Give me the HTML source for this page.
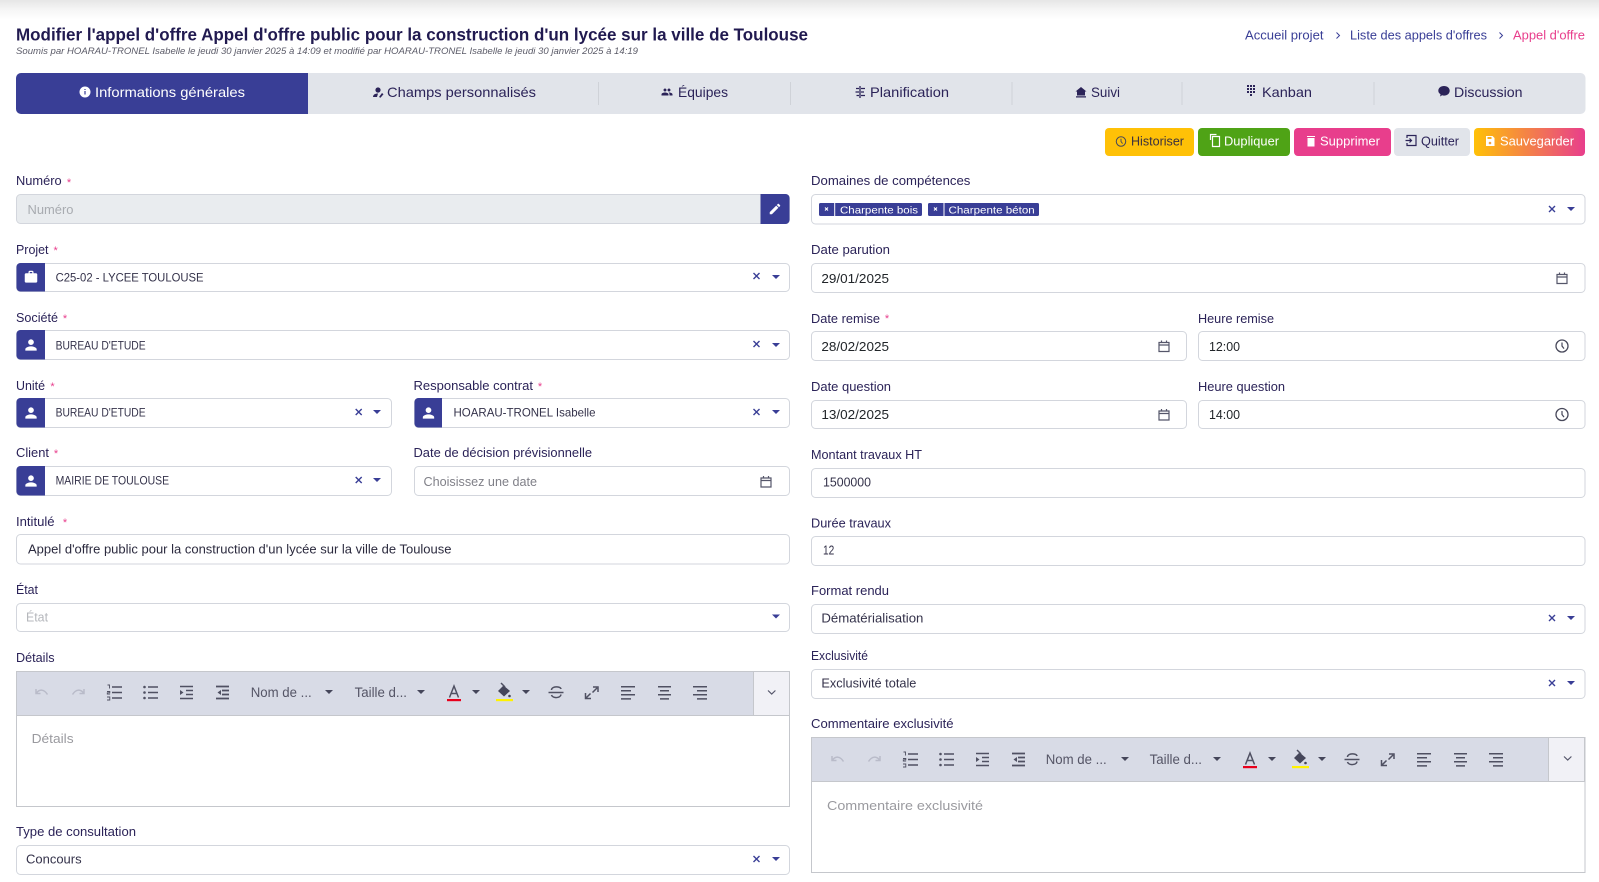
<!DOCTYPE html>
<html lang="fr"><head><meta charset="utf-8"><title>Modifier l'appel d'offre</title>
<style>
html,body{margin:0;padding:0;background:#fff;width:1599px;height:882px;overflow:hidden}
svg{display:block;font-family:"Liberation Sans",sans-serif}
.l{font-size:12.5px;fill:#2b2358}
.v{font-size:12.5px;fill:#34324a}
.c{font-size:12px;fill:#34324a}
.d{font-size:13px;fill:#212529}
.p{font-size:13px;fill:#9a9a9f}
.s{font-size:11px;fill:#e83e8c}
.t{font-size:14px;fill:#2b2358}
.bt{font-size:12.5px}
.b{fill:#fff;stroke:#d3d6dd;stroke-width:1}
.nav{fill:#393e96}
.tb{font-size:13.5px;fill:#555566}
.ln{fill:none;stroke:#4f5062;stroke-width:1.5}
.lg{fill:none;stroke:#b9bbc9;stroke-width:1.5}
</style></head><body>
<svg xmlns="http://www.w3.org/2000/svg" width="1599" height="882" viewBox="0 0 1599 882">
<defs>
<linearGradient id="top" x1="0" y1="0" x2="0" y2="1"><stop offset="0" stop-color="#e6e6e6"/><stop offset=".5" stop-color="#f6f6f6"/><stop offset="1" stop-color="#fff"/></linearGradient>
<linearGradient id="sv" x1="0" y1="0" x2="1" y2="0"><stop offset="0" stop-color="#ffc107"/><stop offset="1" stop-color="#e83e8c"/></linearGradient>
<symbol id="person" viewBox="0 0 24 24"><path d="M12 12c2.21 0 4-1.79 4-4s-1.790-4-4-4-4 1.790-4 4 1.790 4 4 4zm0 2c-2.670 0-8 1.340-8 4v2h16v-2c0-2.660-5.330-4-8-4z"/></symbol>
<symbol id="work" viewBox="0 0 24 24"><path d="M20 6h-4V4c0-1.110-.89-2-2-2h-4c-1.110 0-2 .89-2 2v2H4c-1.110 0-2 .89-2 2v11c0 1.110.89 2 2 2h16c1.110 0 2-.89 2-2V8c0-1.110-.89-2-2-2zm-6 0h-4V4h4v2z"/></symbol>
<symbol id="group" viewBox="0 0 24 24"><path d="M16 11c1.660 0 2.990-1.340 2.990-3S17.660 5 16 5s-3 1.340-3 3 1.340 3 3 3zm-8 0c1.660 0 2.990-1.340 2.990-3S9.660 5 8 5 5 6.340 5 8s1.340 3 3 3zm0 2c-2.330 0-7 1.170-7 3.500V19h14v-2.500C15 14.170 10.330 13 8 13zm8 0c-.29 0-.62.02-.97.05 1.160.84 1.970 1.970 1.970 3.450V19h6v-2.500c0-2.330-4.670-3.500-7-3.500z"/></symbol>
<symbol id="pencil" viewBox="0 0 24 24"><path d="M3 17.250V21h3.750L17.810 9.940l-3.750-3.750L3 17.250zM20.710 7.040c.39-.39.39-1.020 0-1.410l-2.340-2.340c-.39-.39-1.020-.39-1.410 0l-1.830 1.830 3.750 3.750 1.830-1.830z"/></symbol>
<symbol id="home" viewBox="0 0 24 24"><path d="M12 2 1 11h3v8h16v-8h3zM2 20.500h20V23H2z"/></symbol>
<symbol id="cal" viewBox="0 0 12 13"><path d="M1 3h10v9H1zM1 5.500h10M3.500 1v2M8.500 1v2" fill="none" stroke="#55566a" stroke-width="1.200"/></symbol>
<symbol id="clk" viewBox="0 0 14 14"><circle cx="7" cy="7" r="6" fill="none" stroke="#47485a" stroke-width="1.300"/><path d="M7 3.500V7l2 2.600" fill="none" stroke="#47485a" stroke-width="1.200"/></symbol>
<g id="tbbg">
<rect x="16.500" y="671.500" width="773" height="44" fill="#d8dbe6" stroke="#c5c7cc"/>
<rect x="753.500" y="671.500" width="36" height="44" fill="#f1f1f6" stroke="#c5c7cc"/>
</g>
<g id="tbicons">
<path class="lg" d="M36 689v4.500h4.500M36.500 693c3-4 7.500-4 11 1.500"/>
<path class="lg" d="M84 689v4.500h-4.500M83.500 693c-3-4-7.500-4-11 1.500"/>
<path class="ln" d="M112 687h10M112 692.500h10M112 698h10"/>
<path d="M107.500 685h2v3.500M107 691.500h2.800v1.300h-2.500v1.300h2.800M107 697h2.800v3h-2.800" fill="none" stroke="#4f5062" stroke-width=".9"/>
<circle cx="144.500" cy="687" r="1.300" fill="#4f5062"/><circle cx="144.500" cy="692.500" r="1.300" fill="#4f5062"/><circle cx="144.500" cy="698" r="1.300" fill="#4f5062"/>
<path class="ln" d="M148 687h10M148 692.500h10M148 698h10"/>
<path class="ln" d="M180 686.500h13M180 698.500h13M186 690.500h7M186 694.500h7"/><path d="M180 690v5l3.500-2.500z" fill="#4f5062"/>
<path class="ln" d="M216 686.500h13M216 698.500h13M222 690.500h7M222 694.500h7" style="stroke-width:1.800"/><path d="M221 690v5l-3.500-2.500z" fill="#4f5062"/>
<path d="M325 690h8l-4 4zM417 690h8l-4 4zM472 690h8l-4 4zM522 690h8l-4 4z" fill="#45465a"/>
<path class="ln" d="M449.500 697.500 454 686l4.500 11.500M451 693.500h6"/>
<rect x="447" y="699" width="14" height="2.200" fill="#e8001c"/>
<path d="M498 691l5.500-5.500 6.500 5.500-6 5.500z" fill="#45465a"/><path class="ln" d="M501 683l4 4"/><circle cx="509.500" cy="696" r="1.300" fill="#45465a"/>
<rect x="496" y="699" width="17" height="2.200" fill="#fff200"/>
<path class="ln" d="M548.500 692.500h15M551.500 690c0-4 9-4 9.500-1M551.500 695c1 3.500 9 3.500 9.500-.5"/>
<path class="ln" d="M597 688l-4.500 4.500M593 687h5v5M586 698l4.500-4.500M585.500 693v5.500h5.500"/>
<path class="ln" d="M621 686.700h14M621 690.700h10M621 694.700h14M621 698.900h10"/>
<path class="ln" d="M658 686.700h13M660 690.700h9M658 694.700h13M660 698.900h9"/>
<path class="ln" d="M693 686.700h14M697 690.700h10M693 694.700h14M697 698.900h10"/>
</g>
<path id="chev" d="M768 690.500l3.700 3.500 3.700-3.500" fill="none" stroke="#55566a" stroke-width="1.200"/>
<symbol id="x" viewBox="0 0 8 8"><path d="M1 1l6 6M7 1L1 7" stroke="#393e96" stroke-width="1.400" fill="none"/></symbol>
</defs>

<rect x="0" y="0" width="1599" height="20" fill="url(#top)"/>

<text x="16" y="40.500" font-size="17.500" font-weight="bold" fill="#211a50" textLength="792" lengthAdjust="spacingAndGlyphs">Modifier l'appel d'offre Appel d'offre public pour la construction d'un lycée sur la ville de Toulouse</text>
<text x="16" y="54" font-size="9" font-style="italic" fill="#5b5b68" textLength="622" lengthAdjust="spacingAndGlyphs">Soumis par HOARAU-TRONEL Isabelle le jeudi 30 janvier 2025 à 14:09 et modifié par HOARAU-TRONEL Isabelle le jeudi 30 janvier 2025 à 14:19</text>

<g font-size="12.500" fill="#393e96" transform="translate(-1,0)">
<text x="1246" y="39.500" textLength="78.500" lengthAdjust="spacingAndGlyphs">Accueil projet</text>
<path d="M1337.500 32.500l3 3-3 3" fill="none" stroke="#393e96"/>
<text x="1351" y="39.500" textLength="137" lengthAdjust="spacingAndGlyphs">Liste des appels d'offres</text>
<path d="M1500.500 32.500l3 3-3 3" fill="none" stroke="#393e96"/>
<text x="1514" y="39.500" textLength="72" lengthAdjust="spacingAndGlyphs" fill="#e83e8c">Appel d'offre</text>
</g>

<!-- Tabs -->
<rect x="16" y="73" width="1569.500" height="41" rx="5" fill="#e1e4ea"/>
<path d="M21 73H308V114H21a5 5 0 0 1-5-5V78a5 5 0 0 1 5-5z" fill="#393e96"/>
<path d="M598.500 82v23M790.500 82v23M1012 82v23M1182 82v23M1374 82v23" stroke="#cfd2d8"/>
<circle cx="85" cy="92" r="5.500" fill="#fff"/><path d="M85 91v3.500M85 89v1" stroke="#393e96" stroke-width="1.200"/>
<text x="95" y="97" class="t" style="fill:#fff" textLength="150" lengthAdjust="spacingAndGlyphs">Informations générales</text>
<circle cx="378" cy="90" r="2.600" fill="#2b2358"/><path d="M373 97c0-3 3-3.500 5-3.500l-1 3.500zM379 97l3-4 1.500 1.200-3 3.500z" fill="#2b2358"/>
<text x="387" y="97" class="t" textLength="149" lengthAdjust="spacingAndGlyphs">Champs personnalisés</text>
<use href="#group" x="661" y="86" width="12" height="12" fill="#2b2358"/>
<text x="678" y="97" class="t" textLength="50" lengthAdjust="spacingAndGlyphs">Équipes</text>
<path d="M860 86v12M856 88.500h3M861 88.500h4M855.500 92h3.500M861 92h3M856.500 95.500h2.500M861 95.500h4" stroke="#2b2358" stroke-width="1.300" fill="none"/>
<text x="870" y="97" class="t" textLength="79" lengthAdjust="spacingAndGlyphs">Planification</text>
<use href="#home" x="1075" y="86" width="12" height="12" fill="#2b2358"/>
<text x="1091" y="97" class="t" textLength="29" lengthAdjust="spacingAndGlyphs">Suivi</text>
<g fill="#2b2358"><path d="M1247 85h2v2h-2zM1250 85h2v2h-2zM1253 85h2v2h-2zM1247 88h2v2h-2zM1250 88h2v2h-2zM1253 88h2v2h-2zM1247 91h2v2h-2zM1250 91h2v2h-2zM1253 91h2v2h-2zM1250 94h2v2h-2z"/></g>
<text x="1262" y="97" class="t" textLength="50" lengthAdjust="spacingAndGlyphs">Kanban</text>
<path d="M1444 86c3.300 0 5.700 2 5.700 4.800 0 2.800-2.400 4.800-5.700 4.800-.7 0-1.300-.1-1.900-.3l-2 1.200.4-2.200c-1.400-.9-2.200-2-2.200-3.500 0-2.800 2.400-4.800 5.700-4.800z" fill="#2b2358"/>
<text x="1454" y="97" class="t" textLength="68.500" lengthAdjust="spacingAndGlyphs">Discussion</text>

<!-- Buttons -->
<rect x="1105" y="128" width="89" height="28" rx="4" fill="#ffc107"/>
<use href="#clk" x="1115.500" y="136" width="11" height="11"/>
<text x="1131" y="145.500" class="bt" fill="#3a3040" textLength="53" lengthAdjust="spacingAndGlyphs">Historiser</text>
<rect x="1198" y="128" width="92" height="28" rx="4" fill="#4fa316"/>
<path d="M1210.500 140v-5.500h6M1212.500 136.500h7v10h-7z" fill="none" stroke="#fff" stroke-width="1.200"/>
<text x="1224" y="145.500" class="bt" fill="#fff" textLength="55" lengthAdjust="spacingAndGlyphs">Dupliquer</text>
<rect x="1294" y="128" width="97" height="28" rx="4" fill="#e83e8c"/>
<path d="M1307 136h8v1h-8zM1307.500 138h7v8.500h-7z" fill="#fff"/>
<text x="1320" y="145.500" class="bt" fill="#fff" textLength="60" lengthAdjust="spacingAndGlyphs">Supprimer</text>
<rect x="1394" y="128" width="76" height="28" rx="4" fill="#e1e4ea"/>
<path d="M1407 138v-2.500h9v10h-9V143M1405.500 140.500h6M1409.500 138.500l2 2-2 2" fill="none" stroke="#2b2358" stroke-width="1.200"/>
<text x="1421" y="145.500" class="bt" fill="#2b2358" textLength="38" lengthAdjust="spacingAndGlyphs">Quitter</text>
<rect x="1474" y="128" width="111" height="28" rx="4" fill="url(#sv)"/>
<path d="M1486 136h6.500l2 2v8h-8.500zM1487.500 137v2h4v-2z" fill="#fff" fill-rule="evenodd"/><circle cx="1490" cy="143" r="1.300" fill="#f4a040"/>
<text x="1500" y="145.500" class="bt" fill="#fff" textLength="74" lengthAdjust="spacingAndGlyphs">Sauvegarder</text>

<!-- LEFT COLUMN -->
<text x="16" y="185" class="l" textLength="45.700" lengthAdjust="spacingAndGlyphs">Numéro</text><text x="69" y="186" class="s" text-anchor="middle">*</text>
<rect x="16.500" y="194.500" width="773" height="29" rx="4" fill="#e9ecef" stroke="#d3d6dd"/>
<path d="M760.500 194h25a4 4 0 0 1 4 4v22a4 4 0 0 1-4 4h-25z" fill="#393e96"/>
<use href="#pencil" x="768" y="202" width="14" height="14" fill="#fff"/>
<text x="27.500" y="214" class="p" style="fill:#a8abb0" textLength="46" lengthAdjust="spacingAndGlyphs">Numéro</text>

<text x="16" y="254" class="l" textLength="32.500" lengthAdjust="spacingAndGlyphs">Projet</text><text x="55.600" y="254" class="s" text-anchor="middle">*</text>
<rect class="b" x="16.500" y="263.500" width="773" height="28" rx="4"/>
<path d="M45 263H20.500a4 4 0 0 0-4 4v20.500a4 4 0 0 0 4 4H45z" class="nav"/>
<use href="#work" x="23.500" y="269.500" width="15" height="15" fill="#fff"/>
<text x="55.600" y="281.500" class="c" textLength="148" lengthAdjust="spacingAndGlyphs">C25-02 - LYCEE TOULOUSE</text>
<use href="#x" x="752.500" y="272" width="8" height="8"/><path d="M772 275h8l-4 4z" class="nav"/>

<text x="16" y="322" class="l" textLength="42" lengthAdjust="spacingAndGlyphs">Société</text><text x="65" y="322" class="s" text-anchor="middle">*</text>
<rect class="b" x="16.500" y="330.500" width="773" height="29" rx="4"/>
<path d="M45 330H20.500a4 4 0 0 0-4 4v21.500a4 4 0 0 0 4 4H45z" class="nav"/>
<use href="#person" x="22.500" y="336.500" width="17" height="17" fill="#fff"/>
<text x="55.600" y="349.500" class="c" textLength="90" lengthAdjust="spacingAndGlyphs">BUREAU D'ETUDE</text>
<use href="#x" x="752.500" y="340" width="8" height="8"/><path d="M772 343h8l-4 4z" class="nav"/>

<text x="16" y="390" class="l" textLength="29" lengthAdjust="spacingAndGlyphs">Unité</text><text x="52.500" y="390" class="s" text-anchor="middle">*</text>
<rect class="b" x="16.500" y="398.500" width="375" height="29" rx="4"/>
<path d="M45 398H20.500a4 4 0 0 0-4 4v21.500a4 4 0 0 0 4 4H45z" class="nav"/>
<use href="#person" x="22.500" y="404.500" width="17" height="17" fill="#fff"/>
<text x="55.600" y="416.500" class="c" textLength="90" lengthAdjust="spacingAndGlyphs">BUREAU D'ETUDE</text>
<use href="#x" x="354.700" y="408" width="8" height="8"/><path d="M373 410h8l-4 4z" class="nav"/>

<text x="413.500" y="390" class="l" textLength="119.500" lengthAdjust="spacingAndGlyphs">Responsable contrat</text><text x="540" y="390" class="s" text-anchor="middle">*</text>
<rect class="b" x="414.500" y="398.500" width="375" height="29" rx="4"/>
<path d="M442 398H418.500a4 4 0 0 0-4 4v21.500a4 4 0 0 0 4 4H442z" class="nav"/>
<use href="#person" x="420" y="404.500" width="17" height="17" fill="#fff"/>
<text x="453.500" y="416.500" class="c" textLength="142" lengthAdjust="spacingAndGlyphs">HOARAU-TRONEL Isabelle</text>
<use href="#x" x="752.500" y="408" width="8" height="8"/><path d="M772 410h8l-4 4z" class="nav"/>

<text x="16" y="457" class="l" textLength="33" lengthAdjust="spacingAndGlyphs">Client</text><text x="56" y="457" class="s" text-anchor="middle">*</text>
<rect class="b" x="16.500" y="466.500" width="375" height="29" rx="4"/>
<path d="M45 466H20.500a4 4 0 0 0-4 4v21.500a4 4 0 0 0 4 4H45z" class="nav"/>
<use href="#person" x="22.500" y="472.500" width="17" height="17" fill="#fff"/>
<text x="55.600" y="484.500" class="c" textLength="113.500" lengthAdjust="spacingAndGlyphs">MAIRIE DE TOULOUSE</text>
<use href="#x" x="354.700" y="476" width="8" height="8"/><path d="M373 478h8l-4 4z" class="nav"/>

<text x="413.500" y="457" class="l" textLength="178.500" lengthAdjust="spacingAndGlyphs">Date de décision prévisionnelle</text>
<rect class="b" x="414.500" y="466.500" width="375" height="29" rx="4"/>
<text x="423.500" y="486" class="p" style="fill:#808088" textLength="113.500" lengthAdjust="spacingAndGlyphs">Choisissez une date</text>
<use href="#cal" x="760" y="475" width="12" height="13"/>

<text x="16" y="526" class="l" textLength="38.600" lengthAdjust="spacingAndGlyphs">Intitulé</text><text x="65" y="526" class="s" text-anchor="middle">*</text>
<rect class="b" x="16.500" y="534.500" width="773" height="29.500" rx="4"/>
<text x="28" y="553.500" class="v" style="fill:#2b2a3e" textLength="423.500" lengthAdjust="spacingAndGlyphs">Appel d'offre public pour la construction d'un lycée sur la ville de Toulouse</text>

<text x="16" y="594" class="l" textLength="22" lengthAdjust="spacingAndGlyphs">État</text>
<rect class="b" x="16.500" y="603.500" width="773" height="28" rx="4"/>
<text x="26" y="621.500" class="p" style="fill:#b5b7bc" textLength="22" lengthAdjust="spacingAndGlyphs">État</text>
<path d="M772 614.500h8l-4 4z" class="nav"/>

<text x="16" y="662" class="l" textLength="38.600" lengthAdjust="spacingAndGlyphs">Détails</text>
<rect x="16.500" y="671.500" width="773" height="135" fill="#fff" stroke="#c5c7cc"/>
<use href="#tbbg"/>
<use href="#tbicons"/>
<use href="#chev"/>
<text x="250.700" y="697" class="tb" textLength="61" lengthAdjust="spacingAndGlyphs">Nom de ...</text>
<text x="354.600" y="697" class="tb" textLength="52.400" lengthAdjust="spacingAndGlyphs">Taille d...</text>
<text x="31.600" y="743" class="p" textLength="42" lengthAdjust="spacingAndGlyphs">Détails</text>

<text x="16" y="836" class="l" textLength="120" lengthAdjust="spacingAndGlyphs">Type de consultation</text>
<rect class="b" x="16.500" y="845.500" width="773" height="29" rx="4"/>
<text x="26" y="863.500" class="v" textLength="55.600" lengthAdjust="spacingAndGlyphs">Concours</text>
<use href="#x" x="752.500" y="855" width="8" height="8"/><path d="M772 857h8l-4 4z" class="nav"/>

<!-- RIGHT COLUMN -->
<text x="811" y="185" class="l" textLength="159.400" lengthAdjust="spacingAndGlyphs">Domaines de compétences</text>
<rect class="b" x="811.500" y="194.500" width="773.500" height="29.500" rx="4"/>
<rect x="819" y="203" width="103" height="13" rx="1.500" class="nav"/><path d="M834.700 203v13" stroke="#fff"/>
<path d="M825 207.500l3 3M828 207.500l-3 3" stroke="#fff" stroke-width="1.100"/>
<text x="840" y="213.500" font-size="10.500" fill="#fff" textLength="78" lengthAdjust="spacingAndGlyphs">Charpente bois</text>
<rect x="928" y="203" width="111" height="13" rx="1.500" class="nav"/><path d="M944 203v13" stroke="#fff"/>
<path d="M934 207.500l3 3M937 207.500l-3 3" stroke="#fff" stroke-width="1.100"/>
<text x="948.500" y="213.500" font-size="10.500" fill="#fff" textLength="86.200" lengthAdjust="spacingAndGlyphs">Charpente béton</text>
<use href="#x" x="1548" y="205" width="8" height="8"/><path d="M1567 207h8l-4 4z" class="nav"/>

<text x="811" y="254" class="l" textLength="79" lengthAdjust="spacingAndGlyphs">Date parution</text>
<rect class="b" x="811.500" y="263.500" width="773.500" height="29" rx="4"/>
<text x="821.400" y="283" class="d" textLength="67.600" lengthAdjust="spacingAndGlyphs">29/01/2025</text>
<use href="#cal" x="1556" y="271.500" width="12" height="13"/>

<text x="811" y="323" class="l" textLength="69" lengthAdjust="spacingAndGlyphs">Date remise</text><text x="887" y="322" class="s" text-anchor="middle">*</text>
<rect class="b" x="811.500" y="331.500" width="375" height="29" rx="4"/>
<text x="821.400" y="351" class="d" textLength="67.600" lengthAdjust="spacingAndGlyphs">28/02/2025</text>
<use href="#cal" x="1158" y="339.500" width="12" height="13"/>
<text x="1198" y="323" class="l" textLength="76" lengthAdjust="spacingAndGlyphs">Heure remise</text>
<rect class="b" x="1198.500" y="331.500" width="386.500" height="29" rx="4"/>
<text x="1209" y="351" class="d" textLength="31" lengthAdjust="spacingAndGlyphs">12:00</text>
<use href="#clk" x="1555" y="339" width="14" height="14"/>

<text x="811" y="391" class="l" textLength="80" lengthAdjust="spacingAndGlyphs">Date question</text>
<rect class="b" x="811.500" y="400.500" width="375" height="28" rx="4"/>
<text x="821.400" y="419" class="d" textLength="67.600" lengthAdjust="spacingAndGlyphs">13/02/2025</text>
<use href="#cal" x="1158" y="408" width="12" height="13"/>
<text x="1198" y="391" class="l" textLength="87" lengthAdjust="spacingAndGlyphs">Heure question</text>
<rect class="b" x="1198.500" y="400.500" width="386.500" height="28" rx="4"/>
<text x="1209" y="419" class="d" textLength="31" lengthAdjust="spacingAndGlyphs">14:00</text>
<use href="#clk" x="1555" y="407.500" width="14" height="14"/>

<text x="811" y="459" class="l" textLength="111" lengthAdjust="spacingAndGlyphs">Montant travaux HT</text>
<rect class="b" x="811.500" y="468.500" width="773.500" height="29" rx="4"/>
<text x="823" y="486.500" class="v" textLength="48" lengthAdjust="spacingAndGlyphs">1500000</text>

<text x="811" y="527.500" class="l" textLength="80" lengthAdjust="spacingAndGlyphs">Durée travaux</text>
<rect class="b" x="811.500" y="536.500" width="773.500" height="29" rx="4"/>
<text x="823" y="554.500" class="v" textLength="11.300" lengthAdjust="spacingAndGlyphs">12</text>

<text x="811" y="595" class="l" textLength="78" lengthAdjust="spacingAndGlyphs">Format rendu</text>
<rect class="b" x="811.500" y="604.500" width="773.500" height="29" rx="4"/>
<text x="821.400" y="622.500" class="v" textLength="102" lengthAdjust="spacingAndGlyphs">Dématérialisation</text>
<use href="#x" x="1548" y="614" width="8" height="8"/><path d="M1567 616h8l-4 4z" class="nav"/>

<text x="811" y="660" class="l" textLength="57" lengthAdjust="spacingAndGlyphs">Exclusivité</text>
<rect class="b" x="811.500" y="669.500" width="773.500" height="29" rx="4"/>
<text x="821.400" y="687.500" class="v" textLength="95" lengthAdjust="spacingAndGlyphs">Exclusivité totale</text>
<use href="#x" x="1548" y="679" width="8" height="8"/><path d="M1567 681h8l-4 4z" class="nav"/>

<text x="811" y="728" class="l" textLength="142.600" lengthAdjust="spacingAndGlyphs">Commentaire exclusivité</text>
<rect x="811.500" y="737.500" width="773.500" height="135" fill="#fff" stroke="#c5c7cc"/>
<use href="#tbbg" transform="translate(795,66)"/>
<use href="#tbicons" transform="translate(796,67)"/>
<use href="#chev" transform="translate(796,66)"/>
<text x="1045.700" y="764" class="tb" textLength="61" lengthAdjust="spacingAndGlyphs">Nom de ...</text>
<text x="1149.600" y="764" class="tb" textLength="52.400" lengthAdjust="spacingAndGlyphs">Taille d...</text>
<text x="827" y="810" class="p" textLength="156" lengthAdjust="spacingAndGlyphs">Commentaire exclusivité</text>
</svg>
</body></html>
